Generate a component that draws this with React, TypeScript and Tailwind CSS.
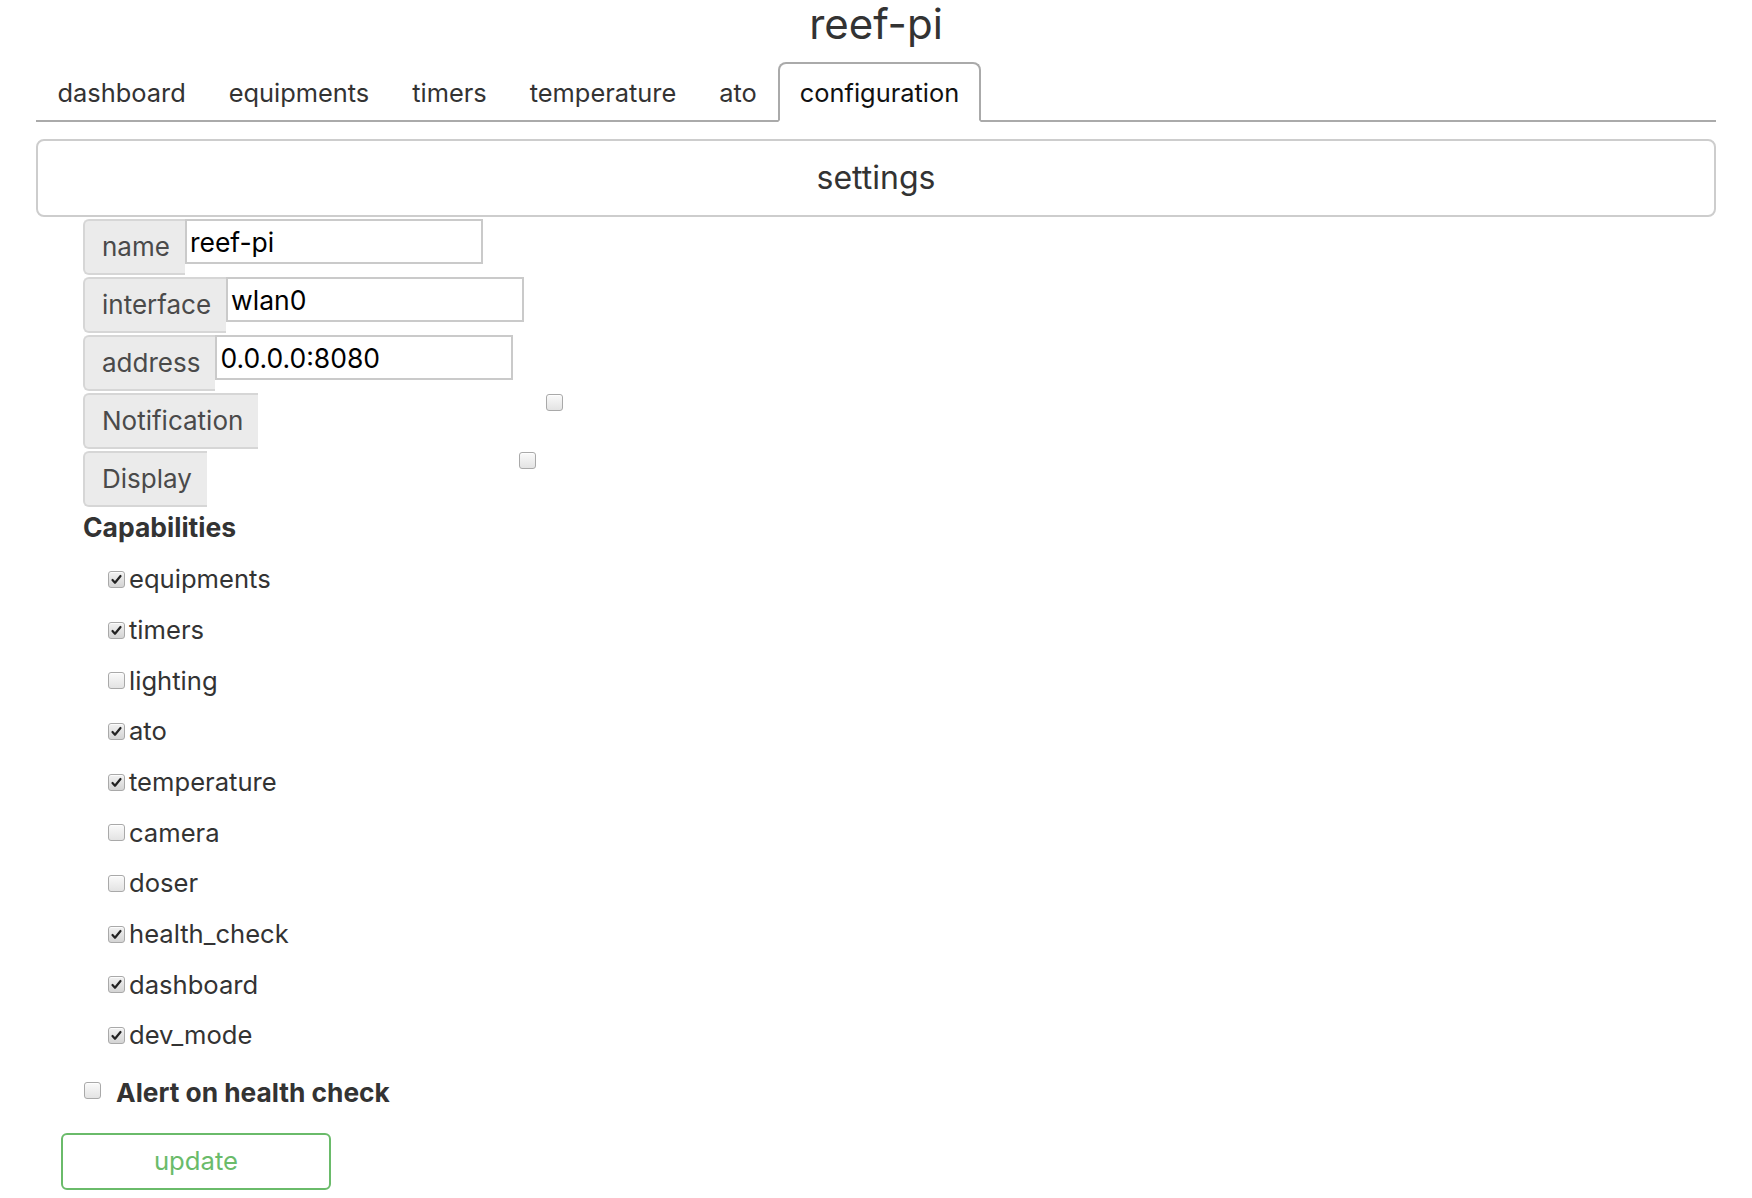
import React from "react";

const tabs = ["dashboard", "equipments", "timers", "temperature", "ato", "configuration"];

const capabilities: [string, boolean][] = [
  ["equipments", true],
  ["timers", true],
  ["lighting", false],
  ["ato", true],
  ["temperature", true],
  ["camera", false],
  ["doser", false],
  ["health_check", true],
  ["dashboard", true],
  ["dev_mode", true],
];

const Box = ({ checked }: { checked: boolean }) => (
  <span
    className={`inline-flex w-[17px] h-[17px] shrink-0 items-center justify-center rounded-[3px] border border-[#a9a9a9] shadow-[inset_0_1px_0_rgba(255,255,255,0.8)] ${
      checked ? "bg-gradient-to-b from-[#f2f2f2] to-[#d4d4d4]" : "bg-gradient-to-b from-[#fafafa] to-[#e3e3e3]"
    }`}
  >
    {checked && (
      <svg width="13" height="13" viewBox="0 0 13 13">
        <path d="M2.5 7 L5 9.8 L10.5 3" fill="none" stroke="#222" strokeWidth="2.2" strokeLinecap="round" strokeLinejoin="round" />
      </svg>
    )}
  </span>
);

// label box + optional text input, like bootstrap input-group
const Row = ({ label, value, cbOffset }: { label: string; value?: string; cbOffset?: string }) => (
  <div className="flex items-start h-[55px]">
    <span className="h-[56px] flex items-center pl-[17px] pr-[15px] pb-[2px] bg-[#ebebeb] border-2 border-r-0 border-[#d6d6d6] rounded-l-[6px] text-[26px] text-[#4a4a4a]">
      {label}
    </span>
    {value !== undefined ? (
      <div className="w-[298px] h-[45px] border-2 border-[#cacaca] flex items-center pl-[3px] pt-[2px] text-[26.5px] text-black">
        {value}
      </div>
    ) : (
      <span className={cbOffset}>
        <Box checked={false} />
      </span>
    )}
  </div>
);

export default function App() {
  return (
    <div className="min-h-screen bg-white font-['Inter',sans-serif] text-[#333]">
      <h1 className="text-center text-[42px] leading-[48px] font-normal">reef-pi</h1>

      <div className="mx-[36px]">
        {/* tabs */}
        <ul className="mt-[14px] flex border-b-2 border-[#aaa]">
          {tabs.map((t) => {
            const active = t === "configuration";
            return (
              <li
                key={t}
                className={`-mb-[2px] h-[60px] px-[19.5px] pt-[14px] text-[25.4px] leading-[30px] border-2 rounded-t-[8px] ${
                  active ? "border-[#aaa] border-b-white text-[#111] bg-white" : "border-transparent"
                }`}
              >
                {t}
              </li>
            );
          })}
        </ul>

        {/* settings header */}
        <div className="mt-[17px] h-[78px] border-2 border-[#cdcdcd] rounded-[8px] flex items-center justify-center text-[32px]">
          settings
        </div>

        <div className="ml-[47px] mt-[2px] flex flex-col gap-[3px]">
          <Row label="name" value="reef-pi" />
          <Row label="interface" value="wlan0" />
          <Row label="address" value="0.0.0.0:8080" />
          <Row label="Notification" cbOffset="ml-[288px]" />
          <Row label="Display" cbOffset="ml-[312px]" />
        </div>

        <div className="ml-[47px] mt-[6px] text-[26.5px] leading-[30px] font-bold">Capabilities</div>

        <div className="ml-[72px] mt-[12px] flex flex-col">
          {capabilities.map(([name, on]) => (
            <label key={name} className="h-[50.7px] flex items-center text-[25.6px]">
              <Box checked={on} />
              <span className="ml-[4px]">{name}</span>
            </label>
          ))}
        </div>

        <div className="ml-[48px] mt-[12px] h-[40px] flex items-center">
          <span className="self-start mt-[8px]">
            <Box checked={false} />
          </span>
          <span className="ml-[15px] text-[26.3px] font-bold">Alert on health check</span>
        </div>

        <button className="ml-[25px] mt-[20px] w-[270px] h-[57px] border-2 border-[#6abb6a] rounded-[6px] text-[25.7px] text-[#6abb6a] bg-white">
          update
        </button>
      </div>
    </div>
  );
}
